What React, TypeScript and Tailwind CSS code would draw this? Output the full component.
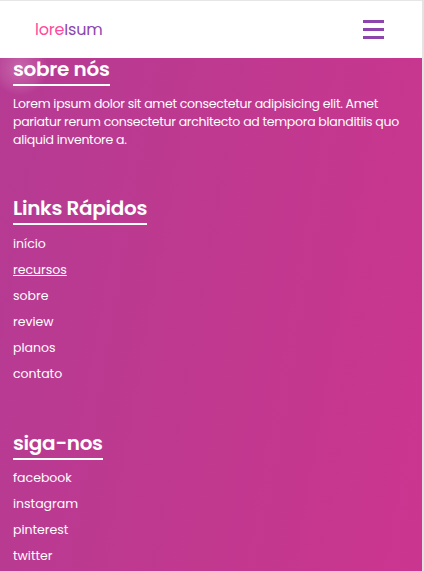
import React from "react";

const font = { fontFamily: "Poppins, Inter, 'Noto Sans', sans-serif" };

function Heading({ children }: { children: React.ReactNode }) {
  return (
    <h3 className="inline-block text-[20px] font-semibold leading-[24px] text-white border-b-2 border-white pb-[3px] tracking-[-0.3px]">
      {children}
    </h3>
  );
}

export default function App() {
  const quick = ["início", "recursos", "sobre", "review", "planos", "contato"];
  const social = ["facebook", "instagram", "pinterest", "twitter"];
  return (
    <div className="w-[424px] h-[571px] overflow-hidden flex flex-col border-r-2 border-[#e3e3e3] bg-[linear-gradient(100deg,#b53b93_0%,#c2388f_60%,#cb3590_100%)]" style={font}>
      <header className="h-[58px] shrink-0 bg-white border-t border-[#e6e6e6] flex items-center justify-between pl-[35px] pr-[38px] relative z-10">
        <div className="text-[16px] leading-none tracking-[-0.2px]">
          <span className="text-[#ff4a9e]">lore</span>
          <span className="text-[#8e44ad]">Isum</span>
        </div>
        <div className="flex flex-col gap-[5px]">
          <div className="w-[21px] h-[3px] bg-[#8e44ad]" />
          <div className="w-[21px] h-[3px] bg-[#8e44ad]" />
          <div className="w-[21px] h-[3px] bg-[#8e44ad]" />
        </div>
      </header>
      <main className="relative flex-1 px-[13px] text-white">
        <div className="absolute left-[-8px] top-[-18px] w-[56px] h-[56px] rounded-full bg-[radial-gradient(circle,rgba(255,255,255,0.22)_0%,rgba(255,255,255,0.08)_50%,rgba(255,255,255,0)_70%)]" />
        <section className="relative -mt-px">
          <Heading>sobre nós</Heading>
          <p className="mt-[9px] text-[12.5px] leading-[18px] tracking-[-0.28px]">
            Lorem ipsum dolor sit amet consectetur adipisicing elit. Amet pariatur rerum consectetur architecto ad tempora blanditiis quo aliquid inventore a.
          </p>
        </section>
        <section className="mt-[47px]">
          <Heading>Links Rápidos</Heading>
          <ul className="mt-[6px] flex flex-col">
            {quick.map((q) => (
              <li key={q} className={`text-[12.5px] leading-[26px] ${q === "recursos" ? "underline" : ""}`}>
                {q}
              </li>
            ))}
          </ul>
        </section>
        <section className="mt-[44px]">
          <Heading>siga-nos</Heading>
          <ul className="mt-[5px] flex flex-col">
            {social.map((q) => (
              <li key={q} className="text-[12.5px] leading-[26px]">
                {q}
              </li>
            ))}
          </ul>
        </section>
      </main>
    </div>
  );
}
